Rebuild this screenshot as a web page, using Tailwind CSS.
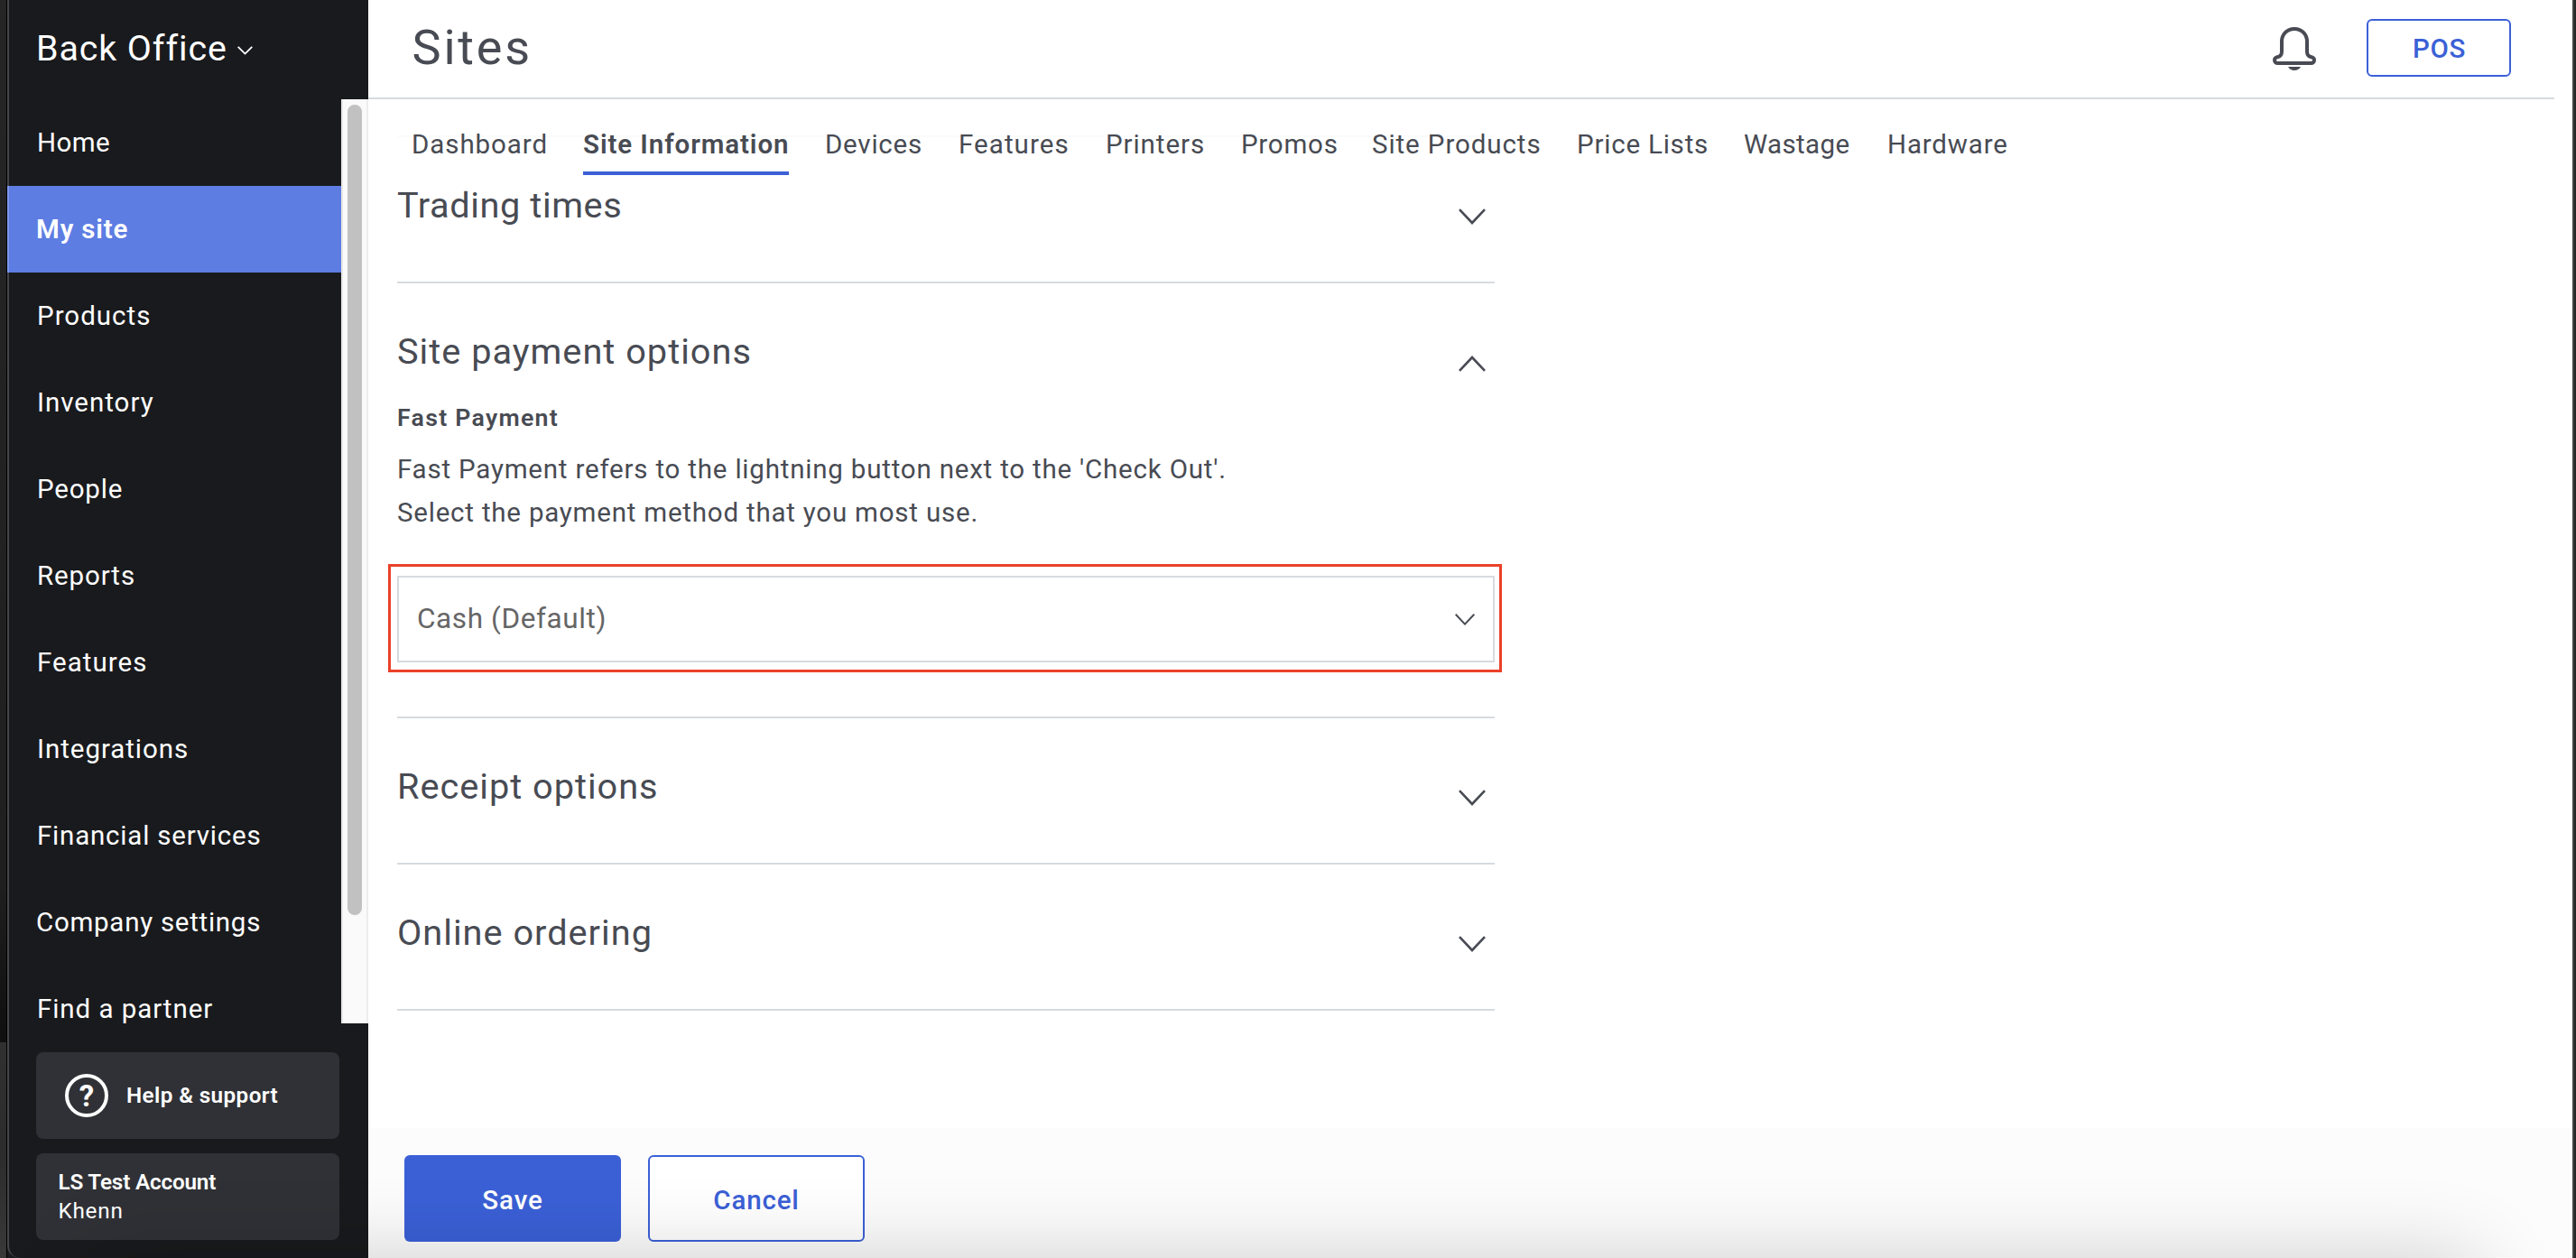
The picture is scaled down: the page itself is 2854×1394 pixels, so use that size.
<!DOCTYPE html>
<html lang="en">
<head>
<meta charset="utf-8">
<title>Sites</title>
<script src="https://cdn.jsdelivr.net/npm/@tailwindcss/browser@4"></script>
</head>
<body class="relative flex h-[1394px] w-[2854px] overflow-hidden bg-white font-[Roboto,sans-serif] text-[29.5px] text-[#484b53]">

  <!-- Desktop behind the window -->
  <div class="w-2 shrink-0 border-r border-black bg-linear-to-b from-[#252525] from-0% via-[#1f1f1f] via-70% to-[#101010] to-82%">
    <div class="mt-[1155px] h-[239px] bg-linear-to-b from-[#303030] via-[#2c2c2c] to-[#383838]"></div>
  </div>

  <!-- Sidebar -->
  <aside class="flex w-[400px] shrink-0 flex-col bg-[#191a1d] text-white">
    <div class="flex h-[110px] shrink-0 items-center pb-[3px] pl-8">
      <span class="w-[220px] whitespace-nowrap text-[39.4px] tracking-[0.023em]">Back Office</span>
      <svg class="mt-1 ml-[3px] h-[10px] w-[17px]" viewBox="0 0 17 10" fill="none" stroke="currentColor" stroke-width="1.8"><path d="M0.7 0.8 8.5 8.6 16.3 0.8"/></svg>
    </div>
    <div class="flex h-[1024px] shrink-0 overflow-hidden">
      <nav class="flex w-[370px] flex-col whitespace-nowrap leading-[96px]">
        <a class="h-24 shrink-0 pl-[33px] tracking-[0.0139em]">Home</a>
        <a class="h-24 shrink-0 bg-[#5d7de3] pl-[32px] font-semibold tracking-[0.0283em]">My site</a>
        <a class="h-24 shrink-0 pl-[33px] tracking-[0.0344em]">Products</a>
        <a class="h-24 shrink-0 pl-[33px] tracking-[0.0332em]">Inventory</a>
        <a class="h-24 shrink-0 pl-[33px] tracking-[0.0273em]">People</a>
        <a class="h-24 shrink-0 pl-[33px] tracking-[0.03em]">Reports</a>
        <a class="h-24 shrink-0 pl-[33px] tracking-[0.035em]">Features</a>
        <a class="h-24 shrink-0 pl-[33px] tracking-[0.032em]">Integrations</a>
        <a class="h-24 shrink-0 pl-[33px] tracking-[0.027em]">Financial services</a>
        <a class="h-24 shrink-0 pl-8 tracking-[0.0246em]">Company settings</a>
        <a class="h-24 shrink-0 pl-[33px] tracking-[0.032em]">Find a partner</a>
      </nav>
      <div class="flex w-[30px] justify-center border-x-2 border-l-[#e8e8e8] border-r-[#ededed] bg-[#fafafa] pt-[6px]">
        <div class="h-[898px] w-4 rounded-full bg-[#c1c1c1]"></div>
      </div>
    </div>
    <div class="flex flex-col gap-4 pt-8 pl-8 text-[24.3px]">
      <div class="flex h-24 w-[336px] items-center rounded-lg bg-[#303136] pl-8">
        <span class="flex size-12 items-center justify-center rounded-full border-4 border-white text-[33px] font-bold leading-none">?</span>
        <span class="ml-5 whitespace-nowrap font-semibold tracking-[0.0155em]">Help &amp; support</span>
      </div>
      <div class="flex h-24 w-[336px] flex-col justify-center whitespace-nowrap rounded-lg bg-[#303136] pl-[24.5px] leading-8">
        <span class="font-semibold tracking-[-0.008em]">LS Test Account</span>
        <span class="tracking-[0.0308em]">Khenn</span>
      </div>
    </div>
  </aside>

  <!-- Main column -->
  <div class="flex w-[2442px] shrink-0 flex-col">
    <header class="flex h-[110px] w-[2422px] shrink-0 items-center justify-between border-b-2 border-[#d7dbe0] pl-[48.5px]">
      <h1 class="pb-1 text-[54px] tracking-[0.0521em]">Sites</h1>
      <div class="mr-12 flex items-center">
        <svg class="mr-14 size-12" viewBox="0 0 48 48" fill="none">
          <path d="M24 2C15.500 2 10 8.500 10 16V27C10 30.500 8.500 32.500 6 33C3.500 33.500 2 34.500 2 36.500S3.500 40 5.500 40H42.500C44.500 40 46 38.500 46 36.500S44.500 33.500 42 33C39.500 32.500 38 30.500 38 27V16C38 8.500 32.500 2 24 2Z" stroke="#484b53" stroke-width="4"/>
          <path d="M17 44H31C29.500 46.500 27 48 24 48S18.500 46.500 17 44Z" fill="#484b53"/>
        </svg>
        <button class="mb-[3px] h-16 w-40 rounded-md border-2 border-[#3b60d6] pt-1 pl-[1px] font-medium tracking-[0.0225em] text-[#3b60d6]">POS</button>
      </div>
    </header>

    <nav class="relative flex h-[84px] shrink-0 gap-10 whitespace-nowrap pt-5 pl-12 leading-[60px]">
      <div class="absolute top-10 left-8 h-[2px] w-[1216px] bg-[#fafbfb]"></div>
      <a class="relative w-[150px] tracking-[0.0313em]">Dashboard</a>
      <a class="relative w-[228px] border-b-4 border-[#3b60d6] font-semibold tracking-[0.031em]">Site Information</a>
      <a class="relative w-[108px] tracking-[0.0259em]">Devices</a>
      <a class="relative w-[123px] tracking-[0.036em]">Features</a>
      <a class="relative w-[110px] tracking-[0.032em]">Printers</a>
      <a class="relative w-[105px] tracking-[0.0259em]">Promos</a>
      <a class="relative w-[187px] tracking-[0.031em]">Site Products</a>
      <a class="relative w-[145px] tracking-[0.027em]">Price Lists</a>
      <a class="relative w-[119px] tracking-[0.0125em]">Wastage</a>
      <a class="relative w-[133px] tracking-[0.0283em]">Hardware</a>
    </nav>

    <main class="ml-8 flex h-[1056px] w-[1216px] shrink-0 flex-col">
      <section class="flex h-[120px] shrink-0 justify-between border-b-2 border-[#d7dbe0] pt-[10px] pr-[10px]">
        <h2 class="text-[39.7px] leading-[48px] tracking-[0.015em]">Trading times</h2>
        <svg class="mt-[27px] h-[18px] w-[30px]" viewBox="0 0 30 18" fill="none" stroke="currentColor" stroke-width="2.6"><path d="M1 1.200 15 16 29 1.200"/></svg>
      </section>

      <section class="flex h-[482px] shrink-0 flex-col border-b-2 border-[#d7dbe0] pt-[52px]">
        <div class="flex justify-between pr-[10px]">
          <h2 class="text-[39.7px] leading-[48px] tracking-[0.0255em]">Site payment options</h2>
          <svg class="mt-7 h-[18px] w-[30px]" viewBox="0 0 30 18" fill="none" stroke="currentColor" stroke-width="2.6"><path d="M1 16.800 15 2 29 16.800"/></svg>
        </div>
        <h3 class="mt-[33px] text-[26.7px] font-semibold leading-8 tracking-[0.048em]">Fast Payment</h3>
        <p class="mt-[17px] whitespace-nowrap leading-[48px]"><span class="tracking-[0.027em]">Fast Payment refers to the lightning button next to the 'Check Out'.</span><br><span class="tracking-[0.0266em]">Select the payment method that you most use.</span></p>
        <div class="relative mt-[46px]">
          <div class="flex h-24 items-center justify-between border-2 border-[#d7dbe0] pr-5 pl-5 text-[31.5px] text-[#666]">
            <span class="tracking-[0.019em]">Cash (Default)</span>
            <svg class="h-[13px] w-[22px]" viewBox="0 0 22 13" fill="none" stroke="#484b53" stroke-width="2"><path d="M0.700 0.800 11 11.600 21.300 0.800"/></svg>
          </div>
          <div class="absolute -top-[13px] -right-2 -bottom-[11px] -left-[10px] border-3 border-[#ea4128]"></div>
        </div>
      </section>

      <section class="flex h-[162px] shrink-0 justify-between border-b-2 border-[#d7dbe0] pt-[52px] pr-[10px]">
        <h2 class="text-[39.7px] leading-[48px] tracking-[0.025em]">Receipt options</h2>
        <svg class="mt-[27px] h-[18px] w-[30px]" viewBox="0 0 30 18" fill="none" stroke="currentColor" stroke-width="2.6"><path d="M1 1.200 15 16 29 1.200"/></svg>
      </section>

      <section class="flex h-[162px] shrink-0 justify-between border-b-2 border-[#d7dbe0] pt-[52px] pr-[10px]">
        <h2 class="text-[39.7px] leading-[48px] tracking-[0.0255em]">Online ordering</h2>
        <svg class="mt-[27px] h-[18px] w-[30px]" viewBox="0 0 30 18" fill="none" stroke="currentColor" stroke-width="2.6"><path d="M1 1.200 15 16 29 1.200"/></svg>
      </section>
    </main>

    <footer class="flex h-36 shrink-0 gap-[30px] bg-[#fcfcfc] pt-[30px] pl-10 font-medium">
      <button class="h-24 w-60 rounded-md bg-[#3b60d6] pt-1 tracking-[0.0314em] text-white">Save</button>
      <button class="h-24 w-60 rounded-md border-2 border-[#3b60d6] bg-white pt-1 tracking-[0.028em] text-[#3b60d6]">Cancel</button>
    </footer>
  </div>

  <div class="w-1 shrink-0 border-l-2 border-[#404142] bg-[#262827]"></div>

  <!-- Window outline and the shadow rising from below it -->
  <div class="absolute top-0 left-2 h-[1394px] w-[2842px] overflow-hidden rounded-bl-[14px] border-l-2 border-white/20">
    <div class="absolute top-[1394px] left-[90px] h-[240px] w-[2645px] shadow-[0_0_90px_rgba(0,0,0,0.19)]"></div>
  </div>
</body>
</html>
